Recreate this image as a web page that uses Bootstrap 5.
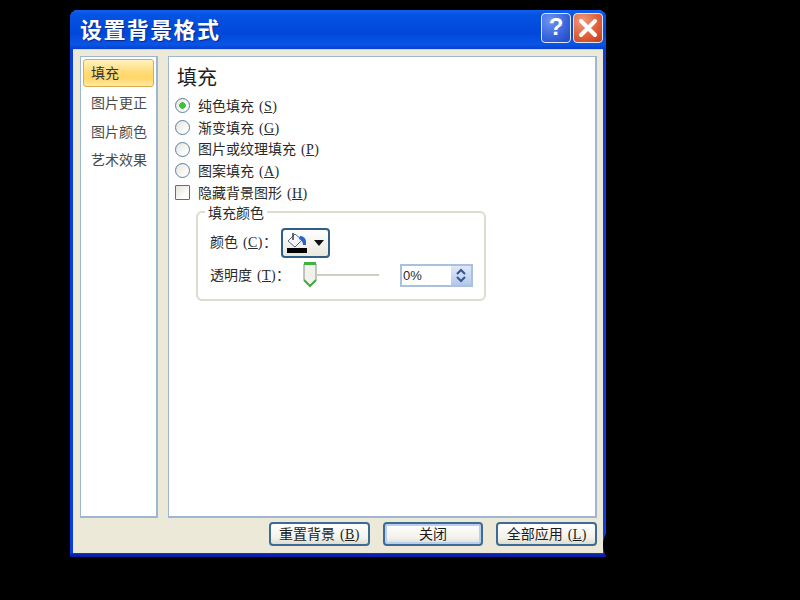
<!DOCTYPE html>
<html lang="zh-CN">
<head>
<meta charset="utf-8">
<title>设置背景格式</title>
<link rel="stylesheet" href="https://cdn.jsdelivr.net/npm/bootstrap@5.3.0/dist/css/bootstrap.min.css">
<style>
html,body{height:100%;}
body{background:#000;width:800px;height:600px;overflow:hidden;padding:10px 0 0 70px;font-family:"Noto Sans CJK SC","Liberation Sans",sans-serif;font-size:14px;line-height:20px;color:#2a2a2a;position:relative;}
.dlg{width:536px;height:547px;border-radius:8px 8px 0 0;background:linear-gradient(180deg,#0a3ee0 0,#0a3ee0 543px,#0b1fa0 545px);overflow:hidden;box-shadow:inset 0 1px 0 #2f7bf5;}
.dlg-title{height:39px;padding:3px 3px 0 10px;background:linear-gradient(180deg,#0f5fee 0%,#0553e3 12%,#0048da 60%,#0a55e6 88%,#0542cf 100%);}
.dlg-name{font-size:22px;line-height:34px;letter-spacing:1.4px;font-weight:700;color:#fff;text-shadow:1px 1px 1px #0b2a8a;margin-top:-2px;}
.cap-btn{width:30px;height:30px;border:1px solid #dfe8fb;border-radius:4px;margin-left:2px;}
.cap-help{background:radial-gradient(circle at 30% 25%,#6f95f0,#3a66dd 55%,#1d46c4);color:#fff;font:700 24px/26px "Liberation Sans",sans-serif;}
.cap-close{background:radial-gradient(circle at 30% 25%,#ee9a7c,#e0603a 55%,#c43a12);}
.dlg-client{background:#ece9d8;margin:0 3px 4px 3px;height:504px;padding:7px 6px 0 7px;box-shadow:inset 0 1px 0 #c5d2e8;}
.pane-row{gap:10px;}
.side-pane{width:78px;height:462px;background:#fff;border:2px solid #9db7d3;border-width:1px 2px 2px 1px;padding:2px;flex:none;}
.side-item{height:28px;padding-left:8px;line-height:27px;color:#4b4b4b;margin-bottom:.5px;}
.side-on{background:linear-gradient(180deg,#fff2c0 0%,#ffdc7a 45%,#ffd768 70%,#ffeaa6 100%);border:1px solid #dcab4e;border-radius:3px;color:#333;margin-bottom:2px;line-height:24px;padding-left:7px;}
.main-pane{width:429px;height:462px;background:#fff;border:2px solid #9db7d3;border-width:1px 2px 2px 1px;padding:7px 0 0 6px;flex:none;}
.pane-head{font-size:20px;line-height:26px;height:26px;margin:0 0 5px 2px;color:#1f1f1f;}
.opt-row{height:21.7px;}
.opt-row .form-check-input{margin:0 8px 0 0;width:15px;height:15px;flex:none;float:none;background:linear-gradient(135deg,#e4e3da,#fff 80%);border:1.5px solid #58809f;box-shadow:none;}
.opt-row .form-check-input:checked{background:radial-gradient(circle,#38c438 0 3px,transparent 3.6px),linear-gradient(135deg,#e4e3da,#fff 80%);border-color:#58809f;}
.opt-row .form-check-input[type=checkbox]{border-radius:1px;border-color:#53708c;}
.opt-row label{line-height:20px;}
.mn{font-family:"Liberation Serif",serif;font-size:14px;margin-left:5px;letter-spacing:.4px;}
.grp{width:290px;height:98px;margin:0 0 0 21px;border:2px solid #dcdbcc;border-radius:6px;padding:0 0 0 12px;}
.grp legend{float:none;width:auto;font-size:14px;line-height:18px;margin:0 0 0 -5px;padding:0 3px;color:#2a2a2a;}
.grp-row1{height:30px;margin-top:7px;}
.grp-lab1{width:71px;padding-bottom:2px;}
.clr-btn{width:49px;height:30px;border:2px solid #2f5f86;border-radius:4px;background:linear-gradient(180deg,#fff,#e9e8dd);padding:0 0 0 3px;}
.clr-arrow{width:0;height:0;border:5px solid transparent;border-top:6px solid #111;border-bottom:0;margin-left:6px;}
.grp-row2{height:26px;margin-top:4px;}
.grp-lab2{width:93px;}
.slider-box{width:97px;height:26px;}
.slider-line{width:62px;height:2px;background:#cfcec2;}
.spin-box{width:73px;height:23px;border:2px solid #a9c1da;background:#fff;padding-left:1px;font:13px/19px "Liberation Sans",sans-serif;}
.spin-btn{width:20px;height:19px;background:linear-gradient(180deg,#dfe8f8,#b4c8ee);}
.btn-row{height:24px;margin:4px 0 0 0;padding-left:189px;gap:13px;}
.xp-btn{width:101px;height:24px;padding:0 0 3px;border:2px solid #3d6b95;border-radius:4px;background:linear-gradient(180deg,#fff,#f2f1ea 70%,#dedccd);font-size:14px;line-height:18px;color:#1c1c1c;}
.xp-btn:hover{background:linear-gradient(180deg,#fff,#f2f1ea 70%,#dedccd);color:#1c1c1c;border-color:#3d6b95;}
.xp-def{box-shadow:inset 0 0 0 2px #b8d0ee;}
.blob{position:absolute;left:603px;top:525px;width:36px;height:40px;border-radius:50%;background:#000;}
</style>
</head>
<body>
<div class="dlg">
  <div class="dlg-title d-flex justify-content-between">
    <div class="dlg-name">设置背景格式</div>
    <div class="d-flex">
      <div class="cap-btn cap-help text-center">?</div>
      <div class="cap-btn cap-close d-flex align-items-center justify-content-center">
        <svg width="22" height="22" viewBox="0 0 22 22"><path d="M4 4L18 18M18 4L4 18" stroke="#fff" stroke-width="4" stroke-linecap="round"/></svg>
      </div>
    </div>
  </div>
  <div class="dlg-client">
    <div class="pane-row d-flex">
      <div class="side-pane">
        <div class="side-item side-on">填充</div>
        <div class="side-item">图片更正</div>
        <div class="side-item">图片颜色</div>
        <div class="side-item">艺术效果</div>
      </div>
      <div class="main-pane">
        <div class="pane-head">填充</div>
        <div class="opt-row d-flex align-items-center"><input class="form-check-input" type="radio" name="f" id="r1" checked><label for="r1">纯色填充<span class="mn">(<u>S</u>)</span></label></div>
        <div class="opt-row d-flex align-items-center"><input class="form-check-input" type="radio" name="f" id="r2"><label for="r2">渐变填充<span class="mn">(<u>G</u>)</span></label></div>
        <div class="opt-row d-flex align-items-center"><input class="form-check-input" type="radio" name="f" id="r3"><label for="r3">图片或纹理填充<span class="mn">(<u>P</u>)</span></label></div>
        <div class="opt-row d-flex align-items-center"><input class="form-check-input" type="radio" name="f" id="r4"><label for="r4">图案填充<span class="mn">(<u>A</u>)</span></label></div>
        <div class="opt-row d-flex align-items-center"><input class="form-check-input" type="checkbox" id="c1"><label for="c1">隐藏背景图形<span class="mn">(<u>H</u>)</span></label></div>
        <fieldset class="grp">
          <legend>填充颜色</legend>
          <div class="grp-row1 d-flex align-items-center">
            <div class="grp-lab1">颜色<span class="mn">(<u>C</u>)</span>：</div>
            <div class="clr-btn d-flex align-items-center">
              <svg width="22" height="24" viewBox="0 0 22 24"><path d="M9 3L2 10l7 6 7-7z" fill="#f4f7fb" stroke="#5a6b85" stroke-width="1"/><path d="M7 2v7" stroke="#333" stroke-width="1.4"/><path d="M14 5c3 0 6 2 6 6v3h-3c0-2-1-5-4-6z" fill="#2a63c9"/><rect x="1" y="17" width="20" height="5" fill="#000"/></svg>
              <span class="clr-arrow"></span>
            </div>
          </div>
          <div class="grp-row2 d-flex align-items-center">
            <div class="grp-lab2">透明度<span class="mn">(<u>T</u>)</span>：</div>
            <div class="slider-box d-flex align-items-center">
              <svg width="14" height="26" viewBox="0 0 14 26"><path d="M1 2h12v16l-6 6-6-6z" fill="#f3f3ee" stroke="#8a8f86"/><path d="M1 1.5h12" stroke="#3fb33f" stroke-width="3"/><path d="M1 18l6 6 6-6" fill="none" stroke="#3fa83f" stroke-width="2"/></svg>
              <div class="slider-line"></div>
            </div>
            <div class="spin-box d-flex align-items-center justify-content-between">
              <span>0%</span>
              <div class="spin-btn d-flex align-items-center justify-content-center">
                <svg width="12" height="15" viewBox="0 0 12 15"><path d="M2 6l4-4 4 4M2 9l4 4 4-4" fill="none" stroke="#37548a" stroke-width="2"/></svg>
              </div>
            </div>
          </div>
        </fieldset>
      </div>
    </div>
    <div class="btn-row d-flex">
      <button type="button" class="btn xp-btn">重置背景<span class="mn">(<u>B</u>)</span></button>
      <button type="button" class="btn xp-btn xp-def">关闭</button>
      <button type="button" class="btn xp-btn">全部应用<span class="mn">(<u>L</u>)</span></button>
    </div>
  </div>
</div>
<div class="blob"></div>
</body>
</html>
